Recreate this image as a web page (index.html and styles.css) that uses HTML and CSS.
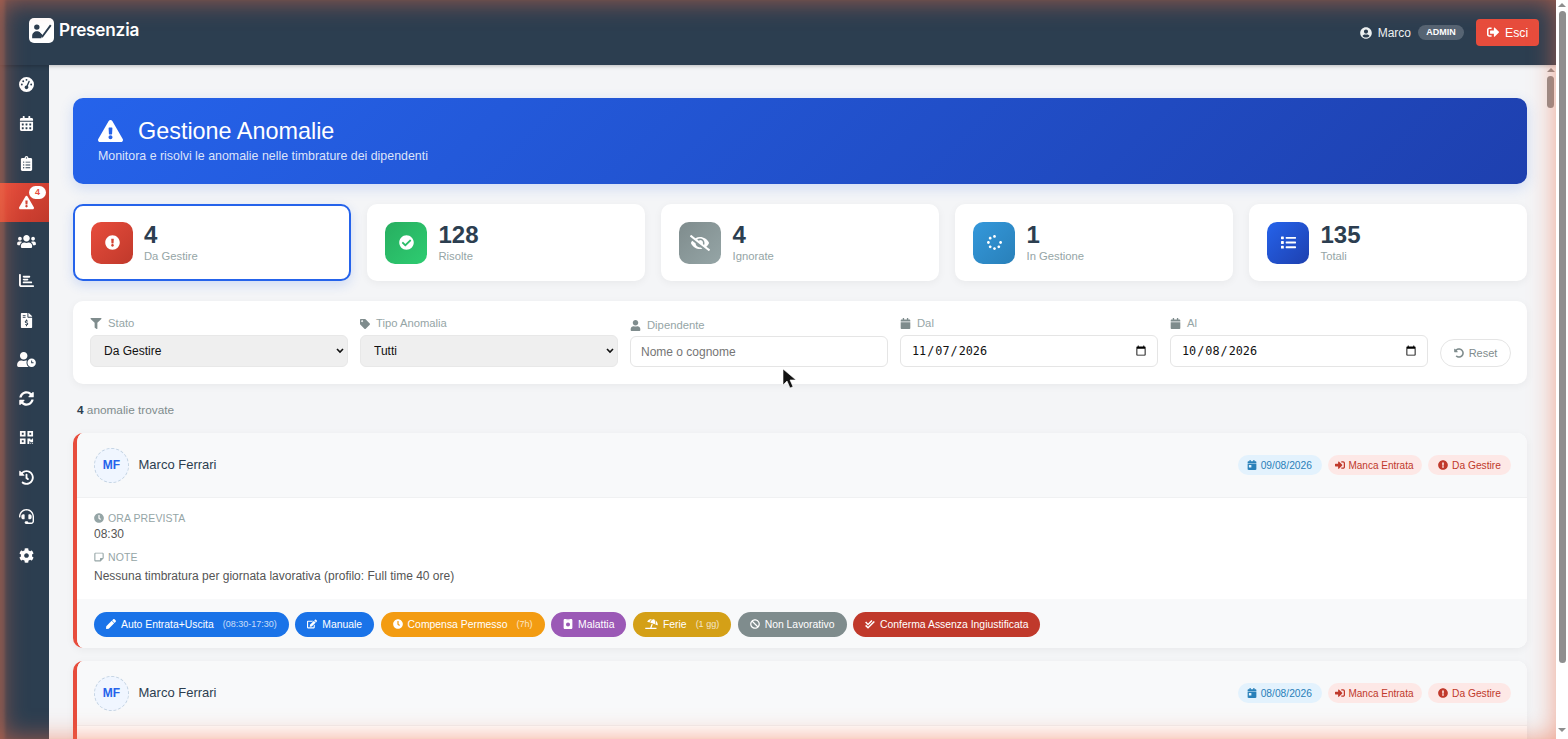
FILE: index.html
```html
<!DOCTYPE html>
<html lang="it">
<head>
<meta charset="utf-8">
<title>Presenzia - Gestione Anomalie</title>
<link rel="stylesheet" href="styles.css">
</head>
<body>
<svg class="defs" aria-hidden="true">
<symbol id="gauge" viewBox="0 0 512 512"><path d="M0 256a256 256 0 1 1 512 0A256 256 0 1 1 0 256zM288 96a32 32 0 1 0 -64 0 32 32 0 1 0 64 0zM256 416c35.3 0 64-28.7 64-64c0-17.4-6.9-33.1-18.1-44.6L366 161.7c5.3-12.1-.2-26.3-12.3-31.6s-26.3 .2-31.6 12.3L257.9 288c-.6 0-1.3 0-1.9 0c-35.3 0-64 28.7-64 64s28.7 64 64 64zM176 144a32 32 0 1 0 -64 0 32 32 0 1 0 64 0zM96 288a32 32 0 1 0 0-64 32 32 0 1 0 0 64zm352-32a32 32 0 1 0 -64 0 32 32 0 1 0 64 0z"/></symbol>
<symbol id="cal-alt" viewBox="0 0 448 512"><path d="M0 464c0 26.5 21.5 48 48 48h352c26.5 0 48-21.5 48-48V192H0v272zm320-196c0-6.6 5.4-12 12-12h40c6.6 0 12 5.4 12 12v40c0 6.6-5.4 12-12 12h-40c-6.6 0-12-5.4-12-12v-40zm0 128c0-6.6 5.4-12 12-12h40c6.6 0 12 5.4 12 12v40c0 6.6-5.4 12-12 12h-40c-6.6 0-12-5.4-12-12v-40zM192 268c0-6.6 5.4-12 12-12h40c6.6 0 12 5.4 12 12v40c0 6.6-5.4 12-12 12h-40c-6.6 0-12-5.4-12-12v-40zm0 128c0-6.6 5.4-12 12-12h40c6.6 0 12 5.4 12 12v40c0 6.6-5.4 12-12 12h-40c-6.6 0-12-5.4-12-12v-40zM64 268c0-6.6 5.4-12 12-12h40c6.6 0 12 5.4 12 12v40c0 6.6-5.4 12-12 12H76c-6.6 0-12-5.4-12-12v-40zm0 128c0-6.6 5.4-12 12-12h40c6.6 0 12 5.4 12 12v40c0 6.6-5.4 12-12 12H76c-6.6 0-12-5.4-12-12v-40zM400 64h-48V16c0-8.8-7.2-16-16-16h-32c-8.8 0-16 7.2-16 16v48H160V16c0-8.8-7.2-16-16-16h-32c-8.8 0-16 7.2-16 16v48H48C21.5 64 0 85.5 0 112v48h448v-48c0-26.5-21.5-48-48-48z"/></symbol>
<symbol id="cal" viewBox="0 0 448 512"><path d="M12 192h424c6.6 0 12 5.4 12 12v260c0 26.5-21.5 48-48 48H48c-26.5 0-48-21.5-48-48V204c0-6.6 5.4-12 12-12zm436-44v-36c0-26.5-21.5-48-48-48h-48V12c0-6.6-5.4-12-12-12h-40c-6.6 0-12 5.4-12 12v52H160V12c0-6.6-5.4-12-12-12h-40c-6.6 0-12 5.4-12 12v52H48C21.5 64 0 85.5 0 112v36c0 6.6 5.4 12 12 12h424c6.6 0 12-5.4 12-12z"/></symbol>
<symbol id="cal-day" viewBox="0 0 448 512"><path d="M0 464c0 26.5 21.5 48 48 48h352c26.5 0 48-21.5 48-48V192H0v272zm64-192c0-8.8 7.2-16 16-16h96c8.800 0 16 7.200 16 16v96c0 8.800-7.200 16-16 16H80c-8.800 0-16-7.200-16-16v-96zM400 64h-48V16c0-8.800-7.200-16-16-16h-32c-8.800 0-16 7.200-16 16v48H160V16c0-8.800-7.200-16-16-16h-32c-8.800 0-16 7.200-16 16v48H48C21.500 64 0 85.500 0 112v48h448v-48c0-26.500-21.500-48-48-48z"/></symbol>
<symbol id="clip" viewBox="0 0 384 512"><path d="M336 64h-80c0-35.3-28.7-64-64-64s-64 28.7-64 64H48C21.5 64 0 85.5 0 112v352c0 26.5 21.5 48 48 48h288c26.5 0 48-21.5 48-48V112c0-26.5-21.5-48-48-48zM96 424c-13.3 0-24-10.7-24-24s10.7-24 24-24 24 10.7 24 24-10.7 24-24 24zm0-96c-13.3 0-24-10.7-24-24s10.7-24 24-24 24 10.7 24 24-10.7 24-24 24zm0-96c-13.3 0-24-10.7-24-24s10.7-24 24-24 24 10.7 24 24-10.7 24-24 24zm96-192c13.3 0 24 10.7 24 24s-10.7 24-24 24-24-10.7-24-24 10.7-24 24-24zm128 368c0 4.4-3.6 8-8 8H168c-4.4 0-8-3.6-8-8v-16c0-4.4 3.6-8 8-8h144c4.4 0 8 3.6 8 8v16zm0-96c0 4.4-3.6 8-8 8H168c-4.4 0-8-3.6-8-8v-16c0-4.4 3.6-8 8-8h144c4.4 0 8 3.6 8 8v16zm0-96c0 4.4-3.6 8-8 8H168c-4.4 0-8-3.6-8-8v-16c0-4.4 3.6-8 8-8h144c4.4 0 8 3.6 8 8v16z"/></symbol>
<symbol id="warn" viewBox="0 0 576 512"><path d="M569.517 440.013C587.975 472.007 564.806 512 527.94 512H48.054c-36.937 0-59.999-40.055-41.577-71.987L246.423 23.985c18.467-32.009 64.72-31.951 83.154 0l239.94 416.028zM288 354c-25.405 0-46 20.595-46 46s20.595 46 46 46 46-20.595 46-46-20.595-46-46-46zm-43.673-165.346l7.418 136c.347 6.364 5.609 11.346 11.982 11.346h48.546c6.373 0 11.635-4.982 11.982-11.346l7.418-136c.375-6.874-5.098-12.654-11.982-12.654h-63.383c-6.884 0-12.356 5.78-11.981 12.654z"/></symbol>
<symbol id="users" viewBox="0 0 640 512"><path d="M96 224c35.3 0 64-28.7 64-64s-28.7-64-64-64-64 28.7-64 64 28.7 64 64 64zm448 0c35.3 0 64-28.7 64-64s-28.7-64-64-64-64 28.7-64 64 28.7 64 64 64zm32 32h-64c-17.6 0-33.5 7.1-45.1 18.6 40.3 22.1 68.9 62 75.1 109.4h66c17.7 0 32-14.3 32-32v-32c0-35.3-28.7-64-64-64zm-256 0c61.9 0 112-50.1 112-112S381.9 32 320 32 208 82.1 208 144s50.1 112 112 112zm76.8 32h-8.3c-20.8 10-43.9 16-68.5 16s-47.6-6-68.5-16h-8.3C179.6 288 128 339.6 128 403.2V432c0 26.5 21.5 48 48 48h288c26.5 0 48-21.5 48-48v-28.8c0-63.6-51.6-115.2-115.2-115.2zm-223.7-13.4C161.5 263.1 145.6 256 128 256H64c-35.3 0-64 28.7-64 64v32c0 17.7 14.3 32 32 32h65.9c6.3-47.4 34.9-87.3 75.2-109.4z"/></symbol>
<symbol id="chart" viewBox="0 0 512 512"><path d="M0 64c0-18 14-32 32-32s32 14 32 32v336c0 9 7 16 16 16h400c18 0 32 14 32 32s-14 32-32 32H80c-44 0-80-36-80-80V64zM128 128c0-18 14-32 32-32h192c18 0 32 14 32 32s-14 32-32 32H160c-18 0-32-14-32-32zm32 64h128c18 0 32 14 32 32s-14 32-32 32H160c-18 0-32-14-32-32s14-32 32-32zm0 96h256c18 0 32 14 32 32s-14 32-32 32H160c-18 0-32-14-32-32s14-32 32-32z"/></symbol>
<symbol id="invoice" viewBox="0 0 384 512"><path d="M377 105L279.1 7c-4.500-4.500-10.600-7-17-7H256v128h128v-6.100c0-6.300-2.500-12.400-7-16.900zm-153 31V0H24C10.700 0 0 10.700 0 24v464c0 13.300 10.700 24 24 24h336c13.300 0 24-10.700 24-24V160H248c-13.200 0-24-10.800-24-24zM64 72c0-4.420 3.580-8 8-8h80c4.420 0 8 3.580 8 8v16c0 4.420-3.580 8-8 8H72c-4.420 0-8-3.580-8-8V72zm0 80v-16c0-4.420 3.580-8 8-8h80c4.420 0 8 3.580 8 8v16c0 4.420-3.580 8-8 8H72c-4.420 0-8-3.580-8-8zm144 263.880V440c0 4.420-3.580 8-8 8h-16c-4.420 0-8-3.580-8-8v-24.290c-11.290-.58-22.270-4.520-31.370-11.350-3.900-2.930-4.100-8.770-.57-12.140l11.750-11.210c2.770-2.640 6.890-2.760 10.130-.73 3.870 2.420 8.260 3.720 12.820 3.720h28.110c6.500 0 11.800-5.920 11.800-13.190 0-5.950-3.610-11.190-8.770-12.730l-45-13.500c-18.590-5.580-31.580-23.420-31.580-43.390 0-24.520 19.050-44.440 42.670-45.070V232c0-4.420 3.580-8 8-8h16c4.420 0 8 3.580 8 8v24.290c11.290.58 22.270 4.510 31.370 11.350 3.900 2.930 4.100 8.770.57 12.140l-11.750 11.210c-2.770 2.640-6.890 2.760-10.130.73-3.870-2.430-8.260-3.720-12.820-3.720h-28.110c-6.500 0-11.800 5.920-11.800 13.190 0 5.950 3.610 11.190 8.770 12.730l45 13.500c18.590 5.580 31.580 23.420 31.580 43.390 0 24.530-19.050 44.440-42.670 45.070z"/></symbol>
<symbol id="user-clock" viewBox="0 0 640 512"><path d="M496 224c-79.600 0-144 64.400-144 144s64.400 144 144 144 144-64.400 144-144-64.400-144-144-144zm64 150.300c0 5.300-4.400 9.700-9.700 9.700h-60.600c-5.300 0-9.700-4.400-9.700-9.700v-76.600c0-5.300 4.400-9.700 9.700-9.700h12.600c5.300 0 9.700 4.400 9.700 9.700V352h38.300c5.300 0 9.700 4.400 9.700 9.700v12.600zM320 368c0-27.800 6.700-54.100 18.200-77.500-8-1.500-16.200-2.500-24.600-2.500h-16.700c-22.200 10.200-46.900 16-72.900 16s-50.600-5.800-72.900-16h-16.700C60.200 288 0 348.200 0 422.400V464c0 26.500 21.500 48 48 48h347.100c-45.300-31.900-75.100-84.500-75.100-144zm-96-112c70.700 0 128-57.300 128-128S294.700 0 224 0 96 57.300 96 128s57.300 128 128 128z"/></symbol>
<symbol id="sync" viewBox="0 0 512 512"><path d="M370.720 133.280C339.458 104.008 298.888 87.962 255.848 88c-77.458.068-144.328 53.178-162.791 126.850-1.344 5.363-6.122 9.150-11.651 9.150H24.103c-7.498 0-13.194-6.807-11.807-14.176C33.933 94.924 134.813 8 256 8c66.448 0 126.791 26.136 171.315 68.685L463.030 40.970C478.149 25.851 504 36.559 504 57.941V192c0 13.255-10.745 24-24 24H345.941c-21.382 0-32.090-25.851-16.971-40.971l41.750-41.749zM32 296h134.059c21.382 0 32.090 25.851 16.971 40.971l-41.750 41.750c31.262 29.273 71.835 45.319 114.876 45.280 77.418-.07 144.315-53.144 162.787-126.849 1.344-5.363 6.122-9.150 11.651-9.150h57.304c7.498 0 13.194 6.807 11.807 14.176C478.067 417.076 377.187 504 256 504c-66.448 0-126.791-26.136-171.315-68.685L48.970 471.030C33.851 486.149 8 475.441 8 454.059V320c0-13.255 10.745-24 24-24z"/></symbol>
<symbol id="qr" viewBox="0 0 448 512"><path d="M0 224h192V32H0v192zM64 96h64v64H64V96zm192-64v192h192V32H256zm128 128h-64V96h64v64zM0 480h192V288H0v192zm64-128h64v64H64v-64zm352-64h32v128h-96v-32h-32v96h-64V288h96v32h64v-32zm0 160h32v32h-32v-32zm-64 0h32v32h-32v-32z"/></symbol>
<symbol id="history" viewBox="0 0 512 512"><path d="M504 255.531c.253 136.640-111.180 248.372-247.820 248.468-59.015.042-113.223-20.530-155.822-54.911-11.077-8.940-11.905-25.541-1.839-35.607l11.267-11.267c8.609-8.609 22.353-9.551 31.891-1.984C173.062 425.135 212.781 440 256 440c101.705 0 184-82.311 184-184 0-101.705-82.311-184-184-184-48.814 0-93.149 18.969-126.068 49.932l50.754 50.754c10.080 10.080 2.941 27.314-11.313 27.314H24c-8.837 0-16-7.163-16-16V38.627c0-14.254 17.234-21.393 27.314-11.314l49.372 49.372C129.209 34.136 189.552 8 256 8c136.810 0 247.747 110.780 248 247.531zm-180.912 78.784l9.823-12.630c8.138-10.463 6.253-25.542-4.210-33.679L288 256.349V152c0-13.255-10.745-24-24-24h-16c-13.255 0-24 10.745-24 24v135.651l65.409 50.874c10.463 8.137 25.541 6.253 33.679-4.210z"/></symbol>
<symbol id="headset" viewBox="0 0 512 512"><path d="M192 208c0-17.670-14.330-32-32-32h-16c-35.350 0-64 28.650-64 64v48c0 35.350 28.650 64 64 64h16c17.670 0 32-14.330 32-32V208zm176 144c35.350 0 64-28.650 64-64v-48c0-35.350-28.650-64-64-64h-16c-17.670 0-32 14.330-32 32v112c0 17.670 14.330 32 32 32h16zM256 0C113.180 0 4.580 118.830 0 256v16c0 8.840 7.160 16 16 16h16c8.840 0 16-7.160 16-16v-16c0-114.690 93.310-208 208-208s208 93.310 208 208h-.12c.08 2.430.12 165.720.12 165.720 0 23.350-18.930 42.280-42.280 42.280H320c0-26.510-21.490-48-48-48h-32c-26.510 0-48 21.490-48 48s21.490 48 48 48h181.720c49.860 0 90.280-40.420 90.280-90.280V256C507.420 118.830 398.820 0 256 0z"/></symbol>
<symbol id="cog" viewBox="0 0 512 512"><path d="M487.400 315.700l-42.600-24.600c4.300-23.200 4.300-47 0-70.200l42.600-24.600c4.900-2.800 7.100-8.600 5.500-14-11.100-35.600-30-67.800-54.700-94.600-3.800-4.100-10-5.100-14.800-2.300L380.800 110c-17.900-15.400-38.500-27.300-60.800-35.100V25.800c0-5.600-3.900-10.500-9.400-11.700-36.700-8.200-74.300-7.800-109.200 0-5.500 1.200-9.400 6.100-9.400 11.700V75c-22.200 7.900-42.800 19.800-60.800 35.100L88.700 85.500c-4.900-2.800-11-1.900-14.800 2.300-24.700 26.700-43.600 58.900-54.700 94.600-1.700 5.400.6 11.200 5.500 14L67.300 221c-4.300 23.200-4.300 47 0 70.200l-42.600 24.600c-4.900 2.800-7.100 8.600-5.500 14 11.100 35.600 30 67.800 54.700 94.600 3.800 4.100 10 5.100 14.800 2.300l42.600-24.600c17.900 15.400 38.500 27.300 60.800 35.100v49.200c0 5.600 3.900 10.500 9.400 11.700 36.700 8.200 74.300 7.800 109.200 0 5.500-1.200 9.400-6.100 9.400-11.700v-49.200c22.200-7.900 42.800-19.800 60.800-35.100l42.600 24.600c4.900 2.800 11 1.900 14.800-2.300 24.700-26.700 43.600-58.900 54.700-94.600 1.500-5.500-.7-11.300-5.600-14.100zM256 336c-44.100 0-80-35.900-80-80s35.900-80 80-80 80 35.900 80 80-35.900 80-80 80z"/></symbol>
<symbol id="user-circle" viewBox="0 0 496 512"><path d="M248 8C111 8 0 119 0 256s111 248 248 248 248-111 248-248S385 8 248 8zm0 96c48.600 0 88 39.400 88 88s-39.400 88-88 88-88-39.400-88-88 39.400-88 88-88zm0 344c-58.700 0-111.300-26.600-146.500-68.200 18.800-35.400 55.600-59.800 98.500-59.800 2.400 0 4.800.4 7.100 1.100 13 4.200 26.600 6.900 40.900 6.900 14.300 0 28-2.700 40.900-6.900 2.300-.7 4.700-1.100 7.100-1.100 42.900 0 79.700 24.400 98.500 59.800C359.300 421.400 306.700 448 248 448z"/></symbol>
<symbol id="sign-out" viewBox="0 0 512 512"><path d="M497 273L329 441c-15 15-41 4.500-41-17v-96H152c-13.300 0-24-10.700-24-24v-96c0-13.300 10.700-24 24-24h136V88c0-21.400 25.900-32 41-17l168 168c9.300 9.400 9.300 24.600 0 34zM192 436v-40c0-6.600-5.400-12-12-12H96c-17.700 0-32-14.300-32-32V160c0-17.700 14.300-32 32-32h84c6.600 0 12-5.400 12-12V76c0-6.600-5.400-12-12-12H96c-53 0-96 43-96 96v192c0 53 43 96 96 96h84c6.600 0 12-5.400 12-12z"/></symbol>
<symbol id="sign-in" viewBox="0 0 512 512"><path d="M416 448h-84c-6.600 0-12-5.400-12-12v-40c0-6.600 5.400-12 12-12h84c17.700 0 32-14.300 32-32V160c0-17.700-14.300-32-32-32h-84c-6.600 0-12-5.400-12-12V76c0-6.600 5.400-12 12-12h84c53 0 96 43 96 96v192c0 53-43 96-96 96zm-47-201L201 79c-15-15-41-4.500-41 17v96H24c-13.300 0-24 10.700-24 24v96c0 13.300 10.700 24 24 24h136v96c0 21.500 26 32 41 17l168-168c9.300-9.400 9.300-24.600 0-34z"/></symbol>
<symbol id="ex-circle" viewBox="0 0 512 512"><path d="M504 256c0 136.997-111.043 248-248 248S8 392.997 8 256C8 119.083 119.043 8 256 8s248 111.083 248 248zm-248 50c-25.405 0-46 20.595-46 46s20.595 46 46 46 46-20.595 46-46-20.595-46-46-46zm-43.673-165.346l7.418 136c.347 6.364 5.609 11.346 11.982 11.346h48.546c6.373 0 11.635-4.982 11.982-11.346l7.418-136c.375-6.874-5.098-12.654-11.982-12.654h-63.383c-6.884 0-12.356 5.780-11.981 12.654z"/></symbol>
<symbol id="check-circle" viewBox="0 0 512 512"><path d="M504 256c0 136.967-111.033 248-248 248S8 392.967 8 256 119.033 8 256 8s248 111.033 248 248zM227.314 387.314l184-184c6.248-6.248 6.248-16.379 0-22.627l-22.627-22.627c-6.248-6.249-16.379-6.249-22.628 0L216 308.118l-70.059-70.059c-6.248-6.248-16.379-6.248-22.628 0l-22.627 22.627c-6.248 6.248-6.248 16.379 0 22.627l104 104c6.249 6.249 16.379 6.249 22.628.001z"/></symbol>
<symbol id="eye-slash" viewBox="0 0 640 512"><path d="M320 400c-75.850 0-137.250-58.710-142.900-133.110L72.200 185.820c-13.790 17.300-26.480 35.590-36.720 55.590a32.350 32.350 0 0 0 0 29.190C89.710 376.410 197.070 448 320 448c26.910 0 52.870-4 77.890-10.460L346 397.390a144.130 144.130 0 0 1-26 2.610zm313.820 58.100l-110.550-85.440a331.250 331.250 0 0 0 81.250-102.070 32.350 32.350 0 0 0 0-29.190C550.290 135.590 442.930 64 320 64a308.150 308.150 0 0 0-147.320 37.700L45.460 3.370A16 16 0 0 0 23 6.180L3.370 31.450A16 16 0 0 0 6.180 53.900l588.360 454.730a16 16 0 0 0 22.460-2.810l19.640-25.270a16 16 0 0 0-2.820-22.450zm-183.720-142l-39.300-30.380A94.750 94.750 0 0 0 416 256a94.760 94.760 0 0 0-121.310-92.210A47.650 47.650 0 0 1 304 192a46.640 46.640 0 0 1-1.540 10l-73.610-56.890A142.310 142.310 0 0 1 320 112a143.920 143.920 0 0 1 144 144c0 21.630-5.290 41.790-13.900 60.110z"/></symbol>
<symbol id="spinner" viewBox="0 0 512 512"><path d="M304 48c0 26.510-21.490 48-48 48s-48-21.490-48-48 21.490-48 48-48 48 21.490 48 48zm-48 368c-26.510 0-48 21.490-48 48s21.490 48 48 48 48-21.490 48-48-21.490-48-48-48zm208-208c-26.510 0-48 21.490-48 48s21.490 48 48 48 48-21.490 48-48-21.490-48-48-48zM96 256c0-26.510-21.490-48-48-48S0 229.490 0 256s21.490 48 48 48 48-21.490 48-48zm12.922 99.078c-26.510 0-48 21.490-48 48s21.490 48 48 48 48-21.490 48-48c0-26.509-21.491-48-48-48zm294.156 0c-26.510 0-48 21.490-48 48s21.490 48 48 48 48-21.490 48-48c0-26.509-21.490-48-48-48zM108.922 60.922c-26.510 0-48 21.490-48 48s21.490 48 48 48 48-21.490 48-48-21.491-48-48-48z"/></symbol>
<symbol id="list" viewBox="0 0 512 512"><path d="M80 368H16a16 16 0 0 0-16 16v64a16 16 0 0 0 16 16h64a16 16 0 0 0 16-16v-64a16 16 0 0 0-16-16zm0-320H16A16 16 0 0 0 0 64v64a16 16 0 0 0 16 16h64a16 16 0 0 0 16-16V64a16 16 0 0 0-16-16zm0 160H16a16 16 0 0 0-16 16v64a16 16 0 0 0 16 16h64a16 16 0 0 0 16-16v-64a16 16 0 0 0-16-16zm416 176H176a16 16 0 0 0-16 16v32a16 16 0 0 0 16 16h320a16 16 0 0 0 16-16v-32a16 16 0 0 0-16-16zm0-320H176a16 16 0 0 0-16 16v32a16 16 0 0 0 16 16h320a16 16 0 0 0 16-16V80a16 16 0 0 0-16-16zm0 160H176a16 16 0 0 0-16 16v32a16 16 0 0 0 16 16h320a16 16 0 0 0 16-16v-32a16 16 0 0 0-16-16z"/></symbol>
<symbol id="filter" viewBox="0 0 512 512"><path d="M487.976 0H24.028C2.710 0-8.047 25.866 7.058 40.971L192 225.941V432c0 7.831 3.821 15.170 10.237 19.662l80 55.980C298.020 518.690 320 507.493 320 487.980V225.941l184.947-184.970C520.021 25.896 509.338 0 487.976 0z"/></symbol>
<symbol id="tag" viewBox="0 0 512 512"><path d="M0 252.118V48C0 21.490 21.490 0 48 0h204.118a48 48 0 0 1 33.941 14.059l211.882 211.882c18.745 18.745 18.745 49.137 0 67.882L293.823 497.941c-18.745 18.745-49.137 18.745-67.882 0L14.059 286.059A48 48 0 0 1 0 252.118zM112 64c-26.510 0-48 21.490-48 48s21.490 48 48 48 48-21.490 48-48-21.490-48-48-48z"/></symbol>
<symbol id="user" viewBox="0 0 448 512"><path d="M224 256c70.700 0 128-57.300 128-128S294.700 0 224 0 96 57.300 96 128s57.300 128 128 128zm89.600 32h-16.700c-22.200 10.200-46.900 16-72.900 16s-50.600-5.800-72.900-16h-16.700C60.200 288 0 348.200 0 422.400V464c0 26.500 21.500 48 48 48h352c26.500 0 48-21.500 48-48v-41.600c0-74.200-60.200-134.400-134.400-134.400z"/></symbol>
<symbol id="undo" viewBox="0 0 512 512"><path d="M255.545 8c-66.269.119-126.438 26.233-170.860 68.685L48.971 40.971C33.851 25.851 8 36.559 8 57.941V192c0 13.255 10.745 24 24 24h134.059c21.382 0 32.090-25.851 16.971-40.971l-41.750-41.750c30.864-28.899 70.801-44.907 113.230-45.273 92.398-.798 170.283 73.977 169.484 169.442C423.236 348.009 349.816 424 256 424c-41.127 0-79.997-14.678-110.630-41.556-4.743-4.161-11.906-3.908-16.368.553L89.340 422.659c-4.872 4.872-4.631 12.815.482 17.433C133.798 479.813 192.074 504 256 504c136.966 0 247.999-111.033 248-247.998C504.001 119.193 392.354 7.755 255.545 8z"/></symbol>
<symbol id="clock" viewBox="0 0 512 512"><path d="M256 8C119 8 8 119 8 256s111 248 248 248 248-111 248-248S393 8 256 8zm92.490 313l-20 25a16 16 0 0 1-22.490 2.500l-67-49.720a40 40 0 0 1-15-31.230V112a16 16 0 0 1 16-16h32a16 16 0 0 1 16 16v144l58 42.500a16 16 0 0 1 2.490 22.500z"/></symbol>
<symbol id="note" viewBox="0 0 512 512"><path d="M80 32h352c35 0 64 29 64 64v224L336 480H80c-35 0-64-29-64-64V96c0-35 29-64 64-64zm0 48c-5 0-8 3-8 8v328c0 5 3 8 8 8h224v-72c0-26 22-48 48-48h88V88c0-5-3-8-8-8H80z"/></symbol>
<symbol id="pen" viewBox="0 0 512 512"><path d="M290.740 93.240l128.020 128.020-277.990 277.990-114.140 12.600C11.350 513.540-1.560 500.620.14 485.340l12.700-114.220 277.900-277.880zm207.200-19.060l-60.110-60.110c-18.750-18.750-49.160-18.750-67.910 0l-56.550 56.550 128.020 128.020 56.550-56.550c18.750-18.760 18.750-49.160 0-67.910z"/></symbol>
<symbol id="edit" viewBox="0 0 576 512"><path d="M402.600 83.200l90.200 90.200c3.800 3.800 3.800 10 0 13.800L274.400 405.600l-92.800 10.300c-12.400 1.400-22.900-9.100-21.500-21.500l10.300-92.800L388.800 83.200c3.800-3.800 10-3.800 13.800 0zm162-22.900l-48.800-48.800c-15.200-15.200-39.900-15.200-55.200 0l-35.400 35.400c-3.800 3.800-3.800 10 0 13.800l90.200 90.200c3.800 3.800 10 3.800 13.800 0l35.400-35.400c15.200-15.300 15.200-40 0-55.200zM384 346.200V448H64V128h229.800c3.200 0 6.200-1.300 8.500-3.500l40-40c7.600-7.600 2.200-20.500-8.500-20.500H48C21.500 64 0 85.500 0 112v352c0 26.500 21.500 48 48 48h352c26.500 0 48-21.500 48-48V306.200c0-10.700-12.900-16-20.500-8.500l-40 40c-2.200 2.300-3.500 5.300-3.500 8.500z"/></symbol>
<symbol id="medical" viewBox="0 0 448 512"><path d="M64 0h320c35 0 64 29 64 64v384c0 35-29 64-64 64H64c-35 0-64-29-64-64V64C0 29 29 0 64 0zm96 0v48c0 9 7 16 16 16s16-7 16-16V0zm96 0v48c0 9 7 16 16 16s16-7 16-16V0zM224 176a104 104 0 1 0 0 208 104 104 0 1 0 0-208z"/></symbol>
<symbol id="beach" viewBox="0 0 640 512"><path d="M115.380 136.900l102.110 37.180c35.190-81.540 86.210-144.290 139-173.700-95.880-4.890-188.780 36.960-248.530 111.800-6.690 8.400-2.660 21.050 7.420 24.720zm132.250 48.160l238.480 86.830c35.760-121.380 18.700-231.660-42.630-253.980-7.400-2.700-15.130-4-23.090-4-58.020.01-128.270 69.170-172.760 171.150zM521.480 60.500c6.220 16.300 10.830 34.600 13.200 55.190 5.740 49.890-1.420 108.230-18.950 166.980l102.620 37.360c10.090 3.670 21.310-3.430 21.570-14.170 2.320-95.690-41.910-187.440-118.440-245.360zM560 447.980H321.060L386 269.500l-60.140-21.900-72.900 200.370H16c-8.840 0-16 7.160-16 16.010v32.010C0 504.830 7.160 512 16 512h544c8.840 0 16-7.170 16-16.010v-32.010c0-8.840-7.160-16-16-16z"/></symbol>
<symbol id="ban" viewBox="0 0 512 512"><path d="M256 8C119.034 8 8 119.033 8 256s111.034 248 248 248 248-111.034 248-248S392.967 8 256 8zm130.108 117.892c65.448 65.448 70 165.481 20.677 235.637L150.470 105.216c70.204-49.356 170.226-44.735 235.638 20.676zM125.892 386.108c-65.448-65.448-70-165.481-20.677-235.637L361.530 406.784c-70.203 49.356-170.226 44.736-235.638-20.676z"/></symbol>
<symbol id="check-double" viewBox="0 0 512 512"><path d="M60 130l95 95L330 50l55 55-230 230L5 185zM60 300l95 95L450 100l55 55-350 350L5 355z"/></symbol>
<symbol id="logo" viewBox="0 0 24 20"><circle cx="6.500" cy="6" r="3.200"/><path d="M1 19v-2.500C1 13.500 3.500 11 6.500 11c1.500 0 3 .6 4 1.700l2.300 2.300-1 4z"/><path d="M9.500 11.800l3.500 3.500L22 3l1.800 1.500-10.500 14-5.400-5.200z"/></symbol>
</svg>

<div class="app">
  <div class="viewport">
    <header class="topbar">
      <div class="brand">
        <span class="brand-logo"><svg class="brand-mark"><use href="#logo"/></svg></span>
        <span class="brand-name">Presenzia</span>
      </div>
      <div class="userbox">
        <svg class="ico user-ico"><use href="#user-circle"/></svg>
        <span class="user-name">Marco</span>
        <span class="role">ADMIN</span>
        <a class="logout"><svg class="ico"><use href="#sign-out"/></svg>Esci</a>
      </div>
    </header>
    <div class="shell">
      <nav class="sidebar">
        <a class="nav"><svg class="ico"><use href="#gauge"/></svg></a>
        <a class="nav"><svg class="ico"><use href="#cal-alt"/></svg></a>
        <a class="nav"><svg class="ico"><use href="#clip"/></svg></a>
        <a class="nav active"><svg class="ico"><use href="#warn"/></svg><span class="nav-badge">4</span></a>
        <a class="nav"><svg class="ico wide"><use href="#users"/></svg></a>
        <a class="nav"><svg class="ico"><use href="#chart"/></svg></a>
        <a class="nav"><svg class="ico"><use href="#invoice"/></svg></a>
        <a class="nav"><svg class="ico wide"><use href="#user-clock"/></svg></a>
        <a class="nav"><svg class="ico"><use href="#sync"/></svg></a>
        <a class="nav"><svg class="ico"><use href="#qr"/></svg></a>
        <a class="nav"><svg class="ico"><use href="#history"/></svg></a>
        <a class="nav"><svg class="ico"><use href="#headset"/></svg></a>
        <a class="nav"><svg class="ico"><use href="#cog"/></svg></a>
      </nav>
      <main class="main">
        <section class="banner">
          <div class="banner-title">
            <svg class="banner-ico"><use href="#warn"/></svg>
            <h1>Gestione Anomalie</h1>
          </div>
          <p>Monitora e risolvi le anomalie nelle timbrature dei dipendenti</p>
        </section>

        <section class="stats">
          <div class="stat selected">
            <span class="stat-ico red"><svg class="ico"><use href="#ex-circle"/></svg></span>
            <div><div class="stat-num">4</div><div class="stat-label">Da Gestire</div></div>
          </div>
          <div class="stat">
            <span class="stat-ico green"><svg class="ico"><use href="#check-circle"/></svg></span>
            <div><div class="stat-num">128</div><div class="stat-label">Risolte</div></div>
          </div>
          <div class="stat">
            <span class="stat-ico gray"><svg class="ico wide-stat"><use href="#eye-slash"/></svg></span>
            <div><div class="stat-num">4</div><div class="stat-label">Ignorate</div></div>
          </div>
          <div class="stat">
            <span class="stat-ico blue"><svg class="ico"><use href="#spinner"/></svg></span>
            <div><div class="stat-num">1</div><div class="stat-label">In Gestione</div></div>
          </div>
          <div class="stat">
            <span class="stat-ico navy"><svg class="ico"><use href="#list"/></svg></span>
            <div><div class="stat-num">135</div><div class="stat-label">Totali</div></div>
          </div>
        </section>

        <section class="filters">
          <label class="field">
            <span class="field-label"><svg class="ico ico-filter"><use href="#filter"/></svg>Stato</span>
            <select class="control select"><option>Da Gestire</option></select>
          </label>
          <label class="field">
            <span class="field-label"><svg class="ico ico-tag"><use href="#tag"/></svg>Tipo Anomalia</span>
            <select class="control select"><option>Tutti</option></select>
          </label>
          <label class="field">
            <span class="field-label tight"><svg class="ico"><use href="#user"/></svg>Dipendente</span>
            <input class="control text" type="text" placeholder="Nome o cognome">
          </label>
          <label class="field">
            <span class="field-label"><svg class="ico"><use href="#cal"/></svg>Dal</span>
            <input class="control date" type="date" value="2026-11-07">
          </label>
          <label class="field">
            <span class="field-label"><svg class="ico"><use href="#cal"/></svg>Al</span>
            <input class="control date" type="date" value="2026-10-08">
          </label>
          <button class="reset"><svg class="ico"><use href="#undo"/></svg>Reset</button>
        </section>

        <p class="count"><strong>4</strong> anomalie trovate</p>

        <article class="card">
          <header class="card-head">
            <span class="avatar">MF</span>
            <span class="person">Marco Ferrari</span>
            <div class="chips">
              <span class="chip chip-date"><svg class="ico"><use href="#cal-day"/></svg>09/08/2026</span>
              <span class="chip chip-type"><svg class="ico"><use href="#sign-in"/></svg>Manca Entrata</span>
              <span class="chip chip-state"><svg class="ico"><use href="#ex-circle"/></svg>Da Gestire</span>
            </div>
          </header>
          <div class="card-body">
            <div class="info-label"><svg class="ico"><use href="#clock"/></svg>ORA PREVISTA</div>
            <div class="info-value">08:30</div>
            <div class="info-label note-label"><svg class="ico"><use href="#note"/></svg>NOTE</div>
            <div class="info-value">Nessuna timbratura per giornata lavorativa (profilo: Full time 40 ore)</div>
          </div>
          <footer class="card-actions">
            <button class="act a-blue"><svg class="ico"><use href="#pen"/></svg>Auto Entrata+Uscita<small>(08:30-17:30)</small></button>
            <button class="act a-blue"><svg class="ico"><use href="#edit"/></svg>Manuale</button>
            <button class="act a-orange"><svg class="ico"><use href="#clock"/></svg>Compensa Permesso<small>(7h)</small></button>
            <button class="act a-purple"><svg class="ico"><use href="#medical"/></svg>Malattia</button>
            <button class="act a-gold"><svg class="ico wide"><use href="#beach"/></svg>Ferie<small>(1 gg)</small></button>
            <button class="act a-gray"><svg class="ico"><use href="#ban"/></svg>Non Lavorativo</button>
            <button class="act a-red"><svg class="ico"><use href="#check-double"/></svg>Conferma Assenza Ingiustificata</button>
          </footer>
        </article>

        <article class="card">
          <header class="card-head">
            <span class="avatar">MF</span>
            <span class="person">Marco Ferrari</span>
            <div class="chips">
              <span class="chip chip-date"><svg class="ico"><use href="#cal-day"/></svg>08/08/2026</span>
              <span class="chip chip-type"><svg class="ico"><use href="#sign-in"/></svg>Manca Entrata</span>
              <span class="chip chip-state"><svg class="ico"><use href="#ex-circle"/></svg>Da Gestire</span>
            </div>
          </header>
          <div class="card-body"></div>
        </article>
      </main>
      <div class="scrollbar inner"><i class="arrow up"></i><i class="thumb"></i></div>
    </div>
    <svg class="cursor" viewBox="0 0 14 21"><path d="M1 1v16l4-4 3 7 3-1.300-3-6.700h6z"/></svg>
  </div>
  <div class="scrollbar outer"><i class="arrow up"></i><i class="thumb"></i><i class="arrow down"></i></div>
</div>
</body>
</html>
```
FILE: styles.css
```css
* { box-sizing: border-box; }
html, body { margin: 0; height: 100%; overflow: hidden; }
body { font-family: "Liberation Sans", Arial, sans-serif; color: #2c3e50; background: #fff; font-size: 12.5px; }
.defs { display: none; }
.ico { width: 1em; height: 1em; fill: currentColor; flex: none; display: block; }

.app { display: flex; width: 1568px; height: 739px; }
.viewport { position: relative; width: 1556px; height: 739px; display: flex; flex-direction: column; overflow: hidden; background: #f4f5f7; }
.viewport::after { content: ""; position: absolute; inset: 0; pointer-events: none; box-shadow: inset 0 0 26px rgba(235, 110, 75, .62), inset 6px 0 3px -1px rgba(235, 130, 90, .22); z-index: 5; }

.topbar { flex: none; height: 65px; background: #2c3e50; display: flex; align-items: center; justify-content: space-between; padding: 0 17px 0 29px; box-shadow: 0 1px 4px rgba(0, 0, 0, .25); position: relative; z-index: 2; }
.brand { display: flex; align-items: center; gap: 5px; margin-top: -6px; }
.brand-logo { width: 25px; height: 25px; background: #fff; border-radius: 5px; display: flex; align-items: center; justify-content: center; margin-top: 2px; }
.brand-mark { width: 21px; height: 17px; fill: #2c3e50; }
.brand-name { font-family: Inter, sans-serif; font-size: 17.2px; font-weight: 600; color: #fff; margin-top: -1px; letter-spacing: -.2px; }
.userbox { display: flex; align-items: center; color: #ecf0f1; }
.user-ico { font-size: 12px; margin-right: 6px; }
.user-name { margin-right: 7px; font-size: 12px; }
.role { height: 15px; width: 46px; line-height: 15px; text-align: center; border-radius: 8px; background: rgba(255, 255, 255, .2); font-size: 9px; font-weight: 700; margin-right: 12px; color: #fff; }
.logout { width: 63px; height: 27px; border-radius: 4px; background: #e74c3c; color: #fff; font-size: 12.25px; display: flex; align-items: center; justify-content: center; gap: 6px; }

.shell { flex: 1; display: flex; min-height: 0; }
.sidebar { flex: none; width: 49px; background: #2c3e50; display: flex; flex-direction: column; }
.nav { position: relative; height: 39.25px; flex: none; display: flex; align-items: center; justify-content: center; color: #fff; font-size: 15px; padding-left: 4px; }
.nav .wide { width: 19px; height: 15px; }
.nav.active { background: linear-gradient(135deg, #e74c3c, #c0392b); }
.nav-badge { position: absolute; left: 29px; top: 3px; width: 17px; height: 13px; border-radius: 7px; background: #fff; color: #e74c3c; font-size: 9px; font-weight: 700; line-height: 13px; text-align: center; }

.main { flex: 1; min-width: 0; overflow: hidden; padding: 33px 18px 0 24px; }
.banner { height: 86px; border-radius: 10px; background: linear-gradient(135deg, #2563eb, #1e40af); color: #fff; padding: 20px 25px; box-shadow: 0 4px 14px rgba(37, 99, 235, .18); }
.banner-title { display: flex; align-items: center; gap: 15px; height: 26px; }
.banner-ico { width: 25px; height: 24px; fill: #fff; }
.banner h1 { margin: 0; font-size: 23.4px; font-weight: 400; }
.banner p { margin: 5px 0 0; font-size: 12.4px; line-height: 14px; color: rgba(255, 255, 255, .85); }

.stats { display: grid; grid-template-columns: repeat(5, 1fr); gap: 16px; margin-top: 20px; }
.stat { height: 77px; background: #fff; border-radius: 10px; padding: 0 18px; display: flex; align-items: center; gap: 11.5px; box-shadow: 0 2px 8px rgba(0, 0, 0, .05); }
.stat.selected { border: 2px solid #2563eb; padding: 0 16px; gap: 11px; box-shadow: 0 4px 12px rgba(37, 99, 235, .18); }
.stat-ico { width: 42px; height: 42px; border-radius: 10px; display: flex; align-items: center; justify-content: center; color: #fff; font-size: 15px; }
.stat-ico .wide-stat { width: 20px; height: 16px; }
.red { background: linear-gradient(135deg, #e74c3c, #c0392b); }
.green { background: linear-gradient(135deg, #27ae60, #2ecc71); }
.gray { background: linear-gradient(135deg, #7f8c8d, #95a5a6); }
.blue { background: linear-gradient(135deg, #3498db, #2980b9); }
.navy { background: linear-gradient(135deg, #2563eb, #1e40af); }
.stat-num { font-size: 24px; font-weight: 700; line-height: 28px; margin-top: -2px; }
.stat-label { font-size: 11.25px; line-height: 14px; color: #95a5a6; }

.filters { margin-top: 20px; height: 83px; background: #fff; border-radius: 10px; padding: 0 16px 17px 17px; display: flex; align-items: flex-end; gap: 12px; box-shadow: 0 2px 8px rgba(0, 0, 0, .05); }
.field { flex: 1; min-width: 0; display: flex; flex-direction: column; }
.field-label { display: flex; align-items: center; gap: 6px; font-size: 11.25px; line-height: 13px; color: #95a5a6; margin-bottom: 5px; }
.field-label.tight { margin-bottom: 4px; }
.field-label .ico { color: #7f8c8d; width: 11px; height: 11px; }
.field-label .ico-filter { width: 12px; }
.field-label .ico-tag { width: 10px; height: 10px; }
.control { width: 100%; font-family: "Liberation Sans", Arial, sans-serif; font-size: 12px; border-radius: 6px; color: #111; }
.select { height: 32px; appearance: none; background: #efefef url("data:image/svg+xml,%3Csvg xmlns='http://www.w3.org/2000/svg' viewBox='0 0 8 6'%3E%3Cpath d='M1 1l3 3 3-3' fill='none' stroke='%23111' stroke-width='1.600'/%3E%3C/svg%3E") no-repeat right 3px center / 8px 6px; border: 1px solid #e8e8e8; padding: 0 14px 0 13px; }
.text { height: 31px; background: #fff; border: 1px solid #e5e5e5; padding: 0 10px 0 10px; }
.text::placeholder { color: #757575; }
.date { height: 32px; background: #fff; border: 1px solid #e5e5e5; padding: 0 8px 0 10px; font-family: "DejaVu Sans Mono", monospace; font-size: 11.8px; }
.reset { flex: none; width: 71px; height: 28px; border-radius: 14px; border: 1px solid #e5e5e5; background: #fff; color: #7f8c8d; font-family: "Liberation Sans", Arial, sans-serif; font-size: 11px; display: flex; align-items: center; justify-content: center; gap: 5px; padding: 0; }
.reset .ico { font-size: 10px; }

.count { margin: 19px 0 0 4px; height: 14px; font-size: 11.8px; line-height: 14px; color: #7f8c8d; }
.count strong { color: #2c3e50; }

.card { margin-top: 13px; background: #fff; border-left: 4px solid #e74c3c; border-radius: 10px; overflow: hidden; box-shadow: 0 2px 8px rgba(0, 0, 0, .05); }
.count + .card { margin-top: 16px; }
.card-head { height: 65px; background: #f8f9fa; border-bottom: 1px solid #f0f1f2; display: flex; align-items: center; padding: 0 16px 0 17px; }
.avatar { width: 35px; height: 35px; border-radius: 50%; background: #f0f6ff; border: 1px dashed #c3d3e3; color: #2563eb; font-size: 12px; font-weight: 700; display: flex; align-items: center; justify-content: center; }
.person { margin-left: 9.5px; font-size: 13px; margin-top: -1px; }
.chips { margin-left: auto; display: flex; gap: 6.5px; }
.chip { height: 20px; border-radius: 10px; display: flex; align-items: center; gap: 4px; padding: 0 10px; font-size: 10.25px; }
.chip .ico { font-size: 10px; }
.chip-date { background: #e3f2fd; color: #2980b9; padding-left: 9px; }
.chip-type { background: #fde8e6; color: #c0392b; font-size: 10px; gap: 3px; padding: 0 8px 0 7px; }
.chip-state { background: #fde8e6; color: #c0392b; }

.card-body { height: 101px; padding: 14px 17px 0; }
.info-label { display: flex; align-items: center; gap: 4px; font-size: 10.5px; line-height: 12px; color: #95a5a6; letter-spacing: .1px; }
.info-label .ico { font-size: 10px; }
.note-label { margin-top: 10px; }
.info-value { font-size: 12px; line-height: 14px; color: #555; margin-top: 3px; }
.note-label + .info-value { margin-top: 6px; }

.card-actions { height: 49px; background: #f8f9fa; display: flex; align-items: center; gap: 6.5px; padding: 1px 17px 0; }
.act { height: 25px; border: 0; border-radius: 13px; color: #fff; font-family: "Liberation Sans", Arial, sans-serif; font-size: 10.4px; display: flex; align-items: center; gap: 5px; padding: 0 12px; white-space: nowrap; }
.act .ico { font-size: 10px; }
.act .wide { width: 13px; height: 10px; }
.act small { font-size: 9px; opacity: .75; margin-left: 4px; }
.a-blue { background: #1a73e8; }
.a-orange { background: #f39c12; }
.a-purple { background: #9b59b6; }
.a-gold { background: #d4a017; }
.a-gray { background: #7f8c8d; }
.a-red { background: #c0392b; }

.scrollbar { flex: none; display: flex; flex-direction: column; align-items: center; }
.scrollbar.inner { width: 11px; background: #f4f5f7; padding-top: 3px; }
.scrollbar.outer { width: 12px; background: #fff; padding: 3px 0; }
.thumb { display: block; width: 7px; border-radius: 4px; background: #8e8e8e; }
.inner .thumb { height: 32px; margin-top: 4px; }
.outer .thumb { height: 652px; margin-top: 4px; }
.arrow { display: block; width: 0; height: 0; border-left: 4px solid transparent; border-right: 4px solid transparent; }
.arrow.up { border-bottom: 4px solid #8e8e8e; }
.arrow.down { border-top: 4px solid #8e8e8e; margin-top: auto; margin-bottom: 4px; }

.cursor { position: absolute; left: 782px; top: 368px; width: 14px; height: 21px; fill: #111; stroke: #fff; stroke-width: .6; z-index: 6; }
```
